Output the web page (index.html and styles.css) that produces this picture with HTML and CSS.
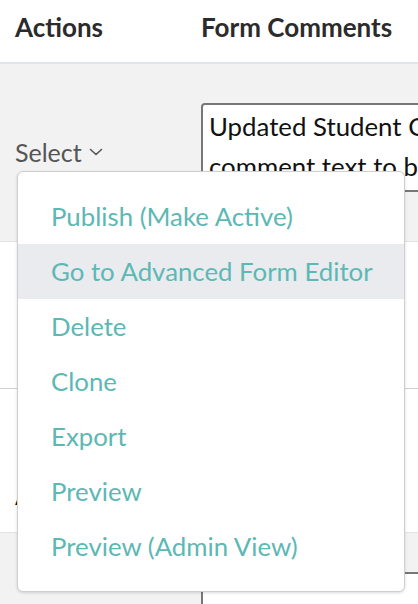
FILE: index.html
```html
<!DOCTYPE html>
<html lang="en">
<head>
<meta charset="utf-8">
<title>Forms</title>
<link rel="stylesheet" href="styles.css">
</head>
<body>
<div class="table">
  <div class="row head">
    <div class="cell c1">Actions</div>
    <div class="cell c2">Form Comments</div>
  </div>
  <div class="row r1 grey">
    <div class="cell c1 middle">
      <div class="select">
        <span class="select-label">Select</span>
        <svg class="chev" width="14" height="8" viewBox="0 0 14 8" aria-hidden="true"><polyline points="1.5,1.5 7,6.5 12.5,1.5" fill="none" stroke="#555" stroke-width="1.6" stroke-linecap="round" stroke-linejoin="round"/></svg>
        <ul class="menu">
          <li class="item">Publish (Make Active)</li>
          <li class="item active">Go to Advanced Form Editor</li>
          <li class="item">Delete</li>
          <li class="item">Clone</li>
          <li class="item">Export</li>
          <li class="item">Preview</li>
          <li class="item">Preview (Admin View)</li>
        </ul>
      </div>
    </div>
    <div class="cell c2 top"><textarea class="comments">Updated Student Comments
comment text to be displayed</textarea></div>
  </div>
  <div class="row r2">
    <div class="cell c1"></div>
    <div class="cell c2"></div>
  </div>
  <div class="row r3">
    <div class="cell c1 status">Active</div>
    <div class="cell c2"></div>
  </div>
  <div class="row r4 grey">
    <div class="cell c1"></div>
    <div class="cell c2 top"><textarea class="comments"></textarea></div>
  </div>
</div>
</body>
</html>
```
FILE: styles.css
```css
html, body {
  margin: 0;
  padding: 0;
  overflow: hidden;
  background: #ffffff;
}
body {
  font-family: Lato, "Open Sans", sans-serif;
  font-size: 26px;
  color: #111;
}
.table {
  width: 580px;
  display: flex;
  flex-direction: column;
}
.row {
  display: grid;
  grid-template-columns: 187px 1fr;
  border-bottom: 1px solid #e3e3e3;
  box-sizing: border-box;
}
.grey { background: #f2f2f2; }
.cell {
  padding: 0 15px;
  box-sizing: border-box;
}
.c2 { padding-left: 14px; }
.head {
  height: 64px;
  border-bottom: 2px solid #e0e4e7;
}
.head .cell {
  font-weight: 700;
  font-size: 26px;
  color: #2b2b2b;
  line-height: 30px;
  padding-top: 12px;
}
.r1 { height: 178px; }
.r2 { height: 147px; border-bottom-color: #d0d0d0; }
.r3 { height: 144px; }
.r4 { height: 120px; border-bottom: none; }
.middle {
  display: flex;
  align-items: center;
  padding-bottom: 2px;
}
.top { padding-top: 39px; }
.status {
  padding-top: 91px;
  line-height: 30px;
  font-size: 25px;
  color: #111;
}
.select {
  position: relative;
  display: flex;
  align-items: center;
  gap: 7px;
  height: 30px;
  color: #555;
  font-size: 25px;
}
.chev { display: block; margin-top: 1px; }
.comments {
  display: block;
  width: 340px;
  height: 89px;
  box-sizing: border-box;
  border: 2px solid #777;
  border-radius: 4px;
  padding: 1px 6px;
  margin: 0;
  font-family: Lato, "Open Sans", sans-serif;
  font-size: 25.8px;
  line-height: 40px;
  color: #111;
  background: #fff;
  resize: none;
  overflow: hidden;
}
.menu {
  position: absolute;
  top: calc(100% + 4px);
  left: 2px;
  width: 388px;
  box-sizing: border-box;
  margin: 0;
  padding: 17px 0;
  list-style: none;
  background: #fff;
  border: 1px solid #cfcfcf;
  border-radius: 6px;
  box-shadow: 0 1px 3px rgba(0,0,0,0.15);
  z-index: 10;
}
.item {
  height: 55px;
  line-height: 55px;
  padding-left: 33px;
  font-size: 25.8px;
  color: #5db8b4;
  white-space: nowrap;
}
.item.active { background: #e9ebee; }
```
